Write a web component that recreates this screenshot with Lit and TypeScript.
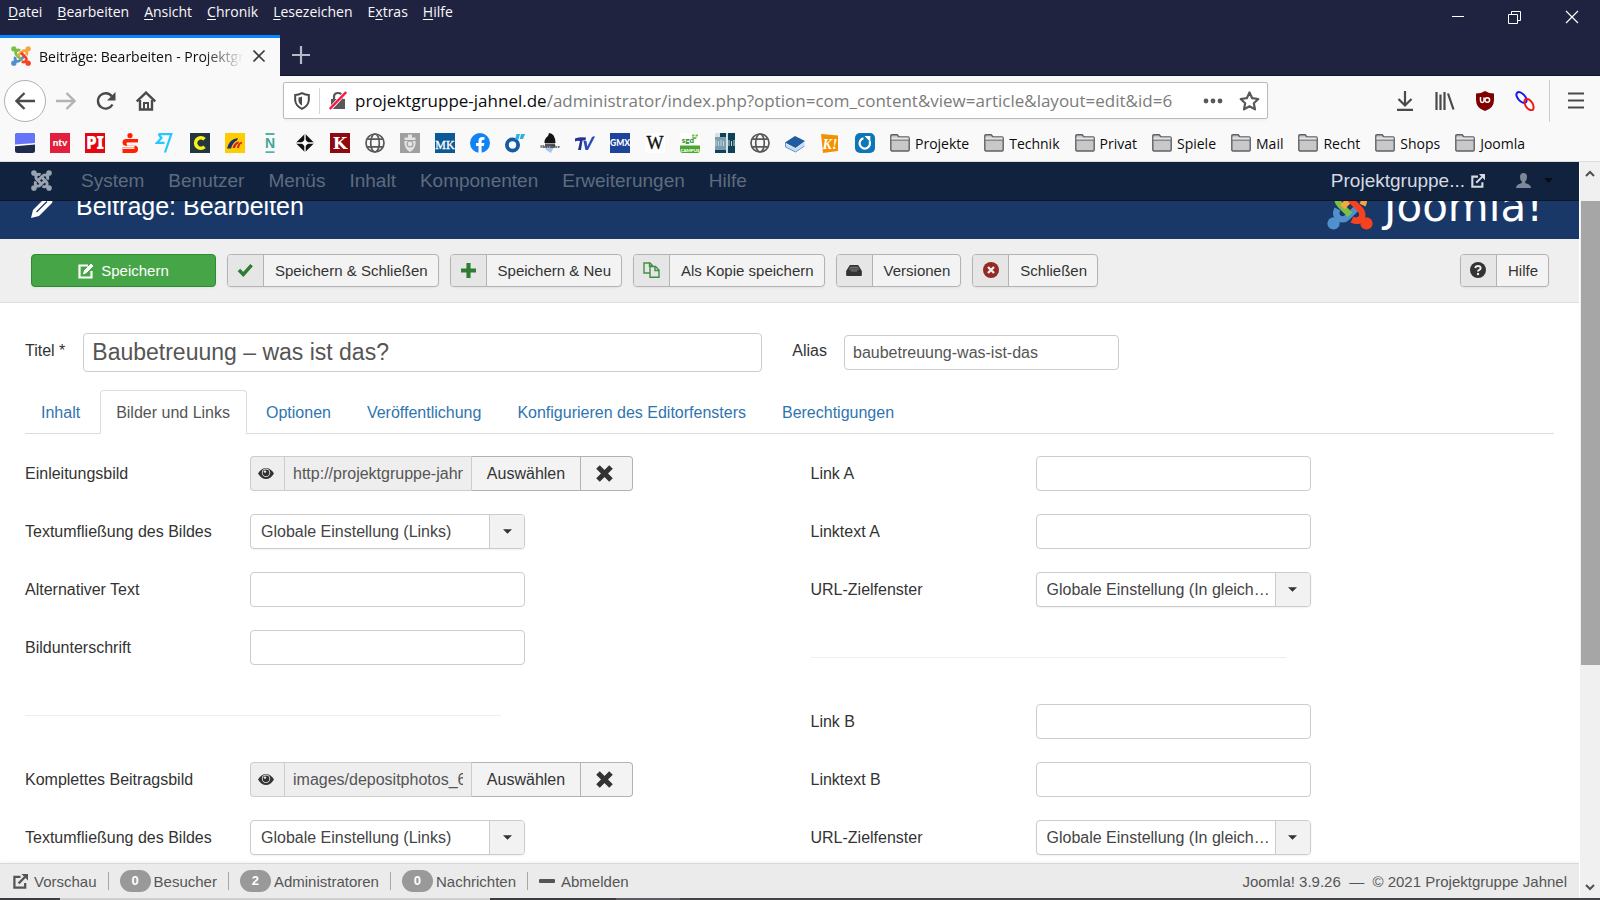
import { LitElement, html, css, svg, nothing } from "lit";
import { customElement } from "lit/decorators.js";

const joomlaArm = (color: string, turn: number) => svg`
  <g transform="rotate(${turn} 12 12)" fill="none" stroke=${color} stroke-width="3.3">
    <circle cx="3.4" cy="20.6" r="3.2" fill=${color} stroke="none" />
    <path d="M4 20 L6.4 17.6" />
    <path d="M5.4 13 Q3.800 16.400 6.400 18 Q8.800 19.200 10.800 17.200 L16 12" />
  </g>`;

const joomlaMark = (size: number, c: string[]) => html`
  <svg width=${size} height=${size} viewBox="0 0 24 24" aria-hidden="true">
    ${joomlaArm(c[0], 0)}${joomlaArm(c[1], 90)}${joomlaArm(c[2], 180)}${joomlaArm(c[3], 270)}
  </svg>`;

const COLORS = ["#5091cd", "#7ac143", "#f9a541", "#f44321"];

const globe = svg`<g fill="none" stroke="#58585a" stroke-width="1.7">
  <circle cx="10" cy="10" r="9" /><ellipse cx="10" cy="10" rx="4.3" ry="9" />
  <path d="M2.2 6.2h15.6M2.2 13.8h15.6" /></g>`;

const favicons = [
  { name: "Lesezeichen 1", art: svg`<rect width="20" height="20" rx="2.5" fill="#1f2a4d"/><path d="M0 2.5Q0 0 2.5 0h15Q20 0 20 2.5v7.7L0 11.8z" fill="#6574f8"/><path d="M0 11.4l20-1.4v1.6L0 13.2z" fill="#fff"/>` },
  { name: "ntv", art: svg`<rect width="20" height="20" fill="#e2203d"/><text x="10" y="13" text-anchor="middle" font-family="Lato" font-weight="900" font-size="10" fill="#fff">ntv</text>` },
  { name: "PI", art: svg`<rect width="20" height="20" fill="#e30613"/><text x="10" y="16" text-anchor="middle" font-family="Noto Sans" font-weight="900" font-size="17" fill="#fff">PI</text>` },
  { name: "Sparkasse", art: svg`<circle cx="10" cy="2.6" r="2.6" fill="#f20"/><path d="M18 6H6.500Q2.500 6 2.500 9.400t4 3.400h8v1.400h-12V20H14q4 0 4-3.800 0-3.600-4-3.600H7V9.600h11z" fill="#f20"/><path d="M6.500 10.600h11.500" stroke="#f9f9fa" stroke-width="1.400"/><path d="M2.500 15.200h12" stroke="#f9f9fa" stroke-width="1.400"/>` },
  { name: "Wise", art: svg`<path d="M3.500 1.200h12.800L10 19.500M3.500 1.200L6.500 5 2 9.800h7.500" fill="none" stroke="#25c8ff" stroke-width="2.200"/>` },
  { name: "C", art: svg`<rect width="20" height="20" fill="#25353f"/><path d="M14.500 6.300a5.200 5.200 0 1 0 0 7.400" fill="none" stroke="#f7f21a" stroke-width="3.600"/>` },
  { name: "Postbank", art: svg`<rect width="20" height="20" fill="#fc0"/><path d="M2 15.500Q4 6 13 5l-1 2.500Q8 9 6 15.500z" fill="#1c3271"/><path d="M7.500 15q1.500-6 6.500-6.500l-.5 1.800Q11 11.500 10 15zM12 15q.8-5.500 4.500-6.300Q17.500 10 17 12l-.8-1.800Q14.500 11.500 14 15z" fill="#d2232a"/>` },
  { name: "N", art: svg`<path d="M5.500 1h9M5.500 19.200h9" stroke="#4db6a0" stroke-width="1.800"/><text x="10" y="15.200" text-anchor="middle" font-family="Liberation Sans" font-size="14" font-weight="700" fill="#3fa796">N</text>` },
  { name: "Stern", art: svg`<path d="M10 3.500l6.500 6.500-6.500 6.500L3.500 10z" fill="none" stroke="#111" stroke-width="4"/><path d="M10 0v20M0 10h20" stroke="#f9f9fa" stroke-width="1.400"/>` },
  { name: "K", art: svg`<rect width="20" height="20" fill="#8f0a10"/><text x="10" y="16" text-anchor="middle" font-family="DejaVu Serif" font-weight="700" font-size="16.500" fill="#fff">K</text>` },
  { name: "Web", art: globe },
  { name: "Wappen", art: svg`<rect width="20" height="20" fill="#9f9f9f"/><path d="M8 1.500h4v3h3.500v7Q14 17 10 19q-4-2-5.500-7.500v-7H8z" fill="#e4e4e4"/><circle cx="10" cy="11" r="3" fill="none" stroke="#9f9f9f" stroke-width="1.200"/><path d="M4 7.500h12" stroke="#9f9f9f"/>` },
  { name: "MK", art: svg`<rect width="20" height="20" fill="#095a97"/><text x="10" y="15.500" text-anchor="middle" font-family="Liberation Serif" font-size="12" fill="#fff" stroke="#fff" stroke-width=".3">MK</text>` },
  { name: "Facebook", art: svg`<circle cx="10" cy="10" r="10" fill="#1283f4"/><path d="M8.500 20v-7H6v-3h2.500V8q0-4 4-4 1 0 2 .2v2.500h-1.300q-1.600 0-1.600 1.500V10h2.800l-.5 3h-2.300v7z" fill="#fff"/>` },
  { name: "O", art: svg`<circle cx="7.500" cy="12" r="5.600" fill="none" stroke="#155aa5" stroke-width="3.800"/><path d="M10 6.500L11.500 1h3.500l-1.500 5.500zM14.800 6L16 1h4L18 6z" fill="#2eb0e4"/>` },
  { name: "Shredder", art: svg`<path d="M4.500 10Q4 6 8 3l1-3q6 0 6.500 10z" fill="#151515"/><path d="M5 14h9l-3 6-5-3z" fill="#abc1ef"/><path d="M5 10.500h10v3H5z" fill="#555"/><text x="10" y="14.500" text-anchor="middle" font-family="Liberation Serif" font-weight="700" font-size="5" fill="#222">Shredder</text>` },
  { name: "TV", art: svg`<path d="M0 5.500q5-2 11-1l-.5 3H7.500L6 17H3L5 8Q2 7.500 0 8.500z" fill="#24338f"/><path d="M8.500 8h3l.8 5.500L17 4q2-1 3-.5L13 17h-2.600z" fill="#2a4bc0"/>` },
  { name: "GMX", art: svg`<rect width="20" height="20" fill="#1c449b"/><text x="10" y="13" text-anchor="middle" font-family="Lato" font-weight="900" font-size="8.500" fill="#fff">GMX</text>` },
  { name: "Wikipedia", art: svg`<rect width="20" height="20" rx="3" fill="#fff"/><text x="10" y="16" text-anchor="middle" font-family="Liberation Serif" font-size="18" fill="#111" stroke="#111" stroke-width=".4">W</text>` },
  { name: "sgd", art: svg`<rect width="20" height="20" rx="3" fill="#fff"/><path d="M0 12.500h20V17q0 3-3 3H3q-3 0-3-3z" fill="#4ba82e"/><text x="8" y="9.500" text-anchor="middle" font-family="Lato" font-weight="900" font-size="8" fill="#2f8f2c">sgd</text><path d="M12 2.500h2.500M15.500 2.500H18M14 5h2.500" stroke="#7ac143" stroke-width="2"/><text x="10" y="18.800" text-anchor="middle" font-family="Lato" font-weight="900" font-size="4.500" fill="#fff">CAMPUS</text>` },
  { name: "Webwerk", art: svg`<rect width="20" height="20" fill="#0d4258"/><path d="M0 4h13v13H0z" fill="#7c9fae"/><path d="M11 0h2v20h-2zM0 0h5v4H0z" fill="#d8e2e6"/><path d="M1 7v6M3.500 8v5M6 7v6M8.500 8v5M14 7v6M16.500 8v5M19 7v6" stroke="#c3d3da" stroke-width="1"/>` },
  { name: "Web", art: globe },
  { name: "Buch", art: svg`<path d="M0 9.500L10 3l10 5-9.500 7z" fill="#1e5b9f"/><path d="M1 11v3l9.500 4.500L19.500 12V9L10.500 15.500z" fill="#c4dbf1"/><path d="M0.500 9.500v4.500l10 5 9-6" fill="none" stroke="#5d96cd" stroke-width="1"/>` },
  { name: "K!", art: svg`<path d="M1 1l17 1.500V18L3 20z" fill="#f39200"/><text x="10" y="15.500" text-anchor="middle" font-family="Liberation Serif" font-style="italic" font-weight="700" font-size="14" fill="#fff">K!</text>` },
  { name: "C", art: svg`<rect width="20" height="20" rx="5" fill="#0c76b8"/><path d="M14.600 8.300A5.200 5.200 0 1 1 8.500 5.300" fill="none" stroke="#fff" stroke-width="2.200"/><path d="M9.500 3h5.800v6z" fill="#fff"/>` },
];

const external = (size: number) => html`<svg width=${size} height=${size} viewBox="0 0 16 16" fill="none" stroke="currentColor" stroke-width="2.400" aria-hidden="true"><path d="M8 3H1.500v11.500H13V9.500" /><path d="M6 10l7-7" /><path d="M9 0H16v7z" fill="currentColor" stroke="none"/></svg>`;

const icons: Record<string, unknown> = {
  check: html`<svg width="17" height="14" viewBox="0 0 18 16"><path d="M1.500 8l5 5L16 2.500" fill="none" stroke="#2f7d32" stroke-width="4"/></svg>`,
  plus: html`<svg width="15" height="15" viewBox="0 0 16 16"><path d="M8 0v16M0 8h16" stroke="#2f7d32" stroke-width="4.400"/></svg>`,
  copy: html`<svg width="17" height="16" viewBox="0 0 17 16" fill="#e6e6e6" stroke="#3f8f43" stroke-width="1.400"><path d="M1 1h6l2.500 2.500V11H1z"/><path d="M7 4.500h5.500L16 8v7.300H7z"/><path d="M12 4.500V8.500h4M6.500 1v3h3" fill="none"/></svg>`,
  drive: html`<svg width="16" height="12" viewBox="0 0 17 13"><path d="M4 1h9l4 6.500V12q0 1-1 1H1q-1 0-1-1V7.500z" fill="#333"/><path d="M4 3.500h9M3 5.500h11M5 7.500h7" stroke="#888" stroke-width="1"/></svg>`,
  cancel: html`<svg width="16" height="16" viewBox="0 0 16 16"><circle cx="8" cy="8" r="8" fill="#942a25"/><path d="M5 5l6 6M11 5l-6 6" stroke="#eee" stroke-width="2.400"/></svg>`,
  help: html`<svg width="16" height="16" viewBox="0 0 16 16"><circle cx="8" cy="8" r="8" fill="#333"/><path d="M5.300 6.200Q5.500 4 8 4t2.700 2.100Q10.700 7.400 9 8.100q-1 .4-1 1.300" fill="none" stroke="#eee" stroke-width="1.900"/><circle cx="8" cy="12" r="1.200" fill="#eee"/></svg>`,
};

const folder = html`<svg width="20" height="18" viewBox="0 0 20 18" aria-hidden="true"><path d="M.8 15.500V2Q.8.800 2 .8h5.200L9 3h9q1.200 0 1.200 1.200v11.600q0 1.200-1.200 1.200H2Q.8 17 .8 15.500z" fill="#c8c8ca" stroke="#606063" stroke-width="1.400"/><path d="M1.500 3.500H18.500V5.500H1.500z" fill="#e4e4e6"/><path d="M1 6.200h18" stroke="#707073"/></svg>`;

const saveActions = [
  { icon: "check", label: "Speichern & Schließen" },
  { icon: "plus", label: "Speichern & Neu" },
  { icon: "copy", label: "Als Kopie speichern" },
  { icon: "drive", label: "Versionen" },
  { icon: "cancel", label: "Schließen" },
];

type Field = { id: string; label: string; kind: "text" | "select" | "media"; value?: string };

const imageGroups: Field[][] = [
  [
    { id: "intro", label: "Einleitungsbild", kind: "media", value: "http://projektgruppe-jahnel.de/images" },
    { id: "float1", label: "Textumfließung des Bildes", kind: "select", value: "Globale Einstellung (Links)" },
    { id: "alt", label: "Alternativer Text", kind: "text" },
    { id: "caption", label: "Bildunterschrift", kind: "text" },
  ],
  [
    { id: "full", label: "Komplettes Beitragsbild", kind: "media", value: "images/depositphotos_64" },
    { id: "float2", label: "Textumfließung des Bildes", kind: "select", value: "Globale Einstellung (Links)" },
  ],
];

const linkGroups: Field[][] = ["A", "B"].map((n) => [
  { id: "link" + n, label: "Link " + n, kind: "text" },
  { id: "linktext" + n, label: "Linktext " + n, kind: "text" },
  { id: "target" + n, label: "URL-Zielfenster", kind: "select", value: "Globale Einstellung (In gleichem Fenster)" },
]);

@customElement("browser-chrome")
export class BrowserChrome extends LitElement {
  static styles = css`
    :host { display: block; font-family: "Open Sans", "Noto Sans", sans-serif; font-size: 14px; color: #0c0c0d; }
    * { box-sizing: border-box; }
    button { border: 0; background: none; padding: 0; font: inherit; color: inherit; display: flex; align-items: center; justify-content: center; }
    a { color: inherit; text-decoration: none; }
    svg { display: block; flex: none; }
    .top { background: #202340; height: 76px; border-bottom: 1px solid #12142b; display: flex; flex-direction: column; justify-content: space-between; }
    .menurow { display: flex; align-items: flex-start; justify-content: space-between; height: 34px; }
    .menus { display: flex; gap: 15px; padding: 0 8px; color: #f9f9fa; line-height: 24px; }
    .menus u { text-underline-offset: 2px; }
    .win { display: flex; color: #fff; }
    .win button { width: 57px; height: 34px; }
    .tabs { display: flex; height: 41px; margin-bottom: -1px; }
    .tab { width: 280px; border-top: 3px solid #0a84ff; background: #f9f9fa; display: flex; align-items: center; gap: 8px; padding: 0 14px 2px 11px; }
    .tabtitle { flex: 1; white-space: nowrap; overflow: hidden; mask-image: linear-gradient(to right, #000 80%, transparent); }
    .tab button { width: 14px; }
    .newtab { width: 42px; padding-bottom: 2px; color: #b8b9c6; }
    .nav { height: 49px; background: #f9f9fa; display: flex; align-items: center; padding: 0 11px 0 4px; color: #4a4a4c; }
    .tool { width: 40px; height: 40px; }
    .nav .back { width: 42px; height: 42px; border: 1px solid #b1b1b3; border-radius: 50%; background: #fff; }
    .faded { opacity: .4; }
    .url { flex: 1; max-width: 985px; height: 37px; margin-left: 117px; background: #fff; border: 1px solid #bbb; border-radius: 2px; display: flex; align-items: center; box-shadow: 0 1px 3px rgba(0,0,0,.06); }
    .shield { width: 36px; height: 26px; border-right: 1px solid #d7d7db; display: flex; justify-content: center; align-items: center; }
    .lock { width: 35px; display: flex; justify-content: center; }
    .addr { flex: 1; font-size: 17px; color: #7b7b7b; white-space: nowrap; overflow: hidden; }
    .addr b { font-weight: 400; color: #0c0c0d; }
    .url button { width: 36px; }
    .right { margin-left: auto; display: flex; align-items: center; }
    .menu { border-left: 1px solid #ccc; width: 40px; height: 42px; margin-left: 4px; padding-left: 12px; }
    .marks { height: 37px; background: #f9f9fa; border-bottom: 1px solid #ddd; display: flex; align-items: center; gap: 15px; padding: 0 15px; white-space: nowrap; overflow: hidden; }
    .mark { display: flex; align-items: center; gap: 5px; }
  `;

  render() {
    const menus = [["", "D", "atei"], ["", "B", "earbeiten"], ["", "A", "nsicht"], ["", "C", "hronik"], ["", "L", "esezeichen"], ["E", "x", "tras"], ["", "H", "ilfe"]];
    return html`
      <div class="top">
        <div class="menurow">
          <nav class="menus">${menus.map(([a, k, b]) => html`<span>${a}<u>${k}</u>${b}</span>`)}</nav>
          <div class="win">
            <button aria-label="Minimieren"><svg width="12" height="12" viewBox="0 0 12 12"><path d="M0 5.500h12" stroke="#fff"/></svg></button>
            <button aria-label="Wiederherstellen"><svg width="13" height="13" viewBox="0 0 13 13" fill="none" stroke="#fff"><path d="M.5 3.500h9v9h-9zM3.500 3.500v-3h9v9h-3"/></svg></button>
            <button aria-label="Schließen"><svg width="14" height="14" viewBox="0 0 14 14"><path d="M1 1l12 12M13 1L1 13" stroke="#fff" stroke-width="1.200"/></svg></button>
          </div>
        </div>
        <div class="tabs">
          <div class="tab">
            ${joomlaMark(20, COLORS)}
            <span class="tabtitle">Beiträge: Bearbeiten - Projektgruppe</span>
            <button aria-label="Tab schließen"><svg width="14" height="14" viewBox="0 0 14 14"><path d="M1.500 1.500l11 11M12.500 1.500l-11 11" stroke="#38383a" stroke-width="1.700"/></svg></button>
          </div>
          <button class="newtab" aria-label="Neuer Tab"><svg width="18" height="18" viewBox="0 0 18 18"><path d="M9 0v18M0 9h18" stroke="currentColor" stroke-width="2.200"/></svg></button>
        </div>
      </div>
      <div class="nav">
        <button class="back" aria-label="Zurück"><svg width="20" height="20" viewBox="0 0 20 20" fill="none" stroke="currentColor" stroke-width="2.400"><path d="M20 10H2M9.500 2L1.500 10l8 8"/></svg></button>
        <button class="tool faded" aria-label="Vor"><svg width="20" height="20" viewBox="0 0 20 20" fill="none" stroke="currentColor" stroke-width="2.400"><path d="M0 10h18M10.500 2l8 8-8 8"/></svg></button>
        <button class="tool" aria-label="Neu laden"><svg width="20" height="20" viewBox="0 0 20 20"><path d="M16.500 13.500A7.700 7.700 0 1 1 15.800 5.200" fill="none" stroke="currentColor" stroke-width="2.400"/><path d="M19.500 1v8.500H11z" fill="currentColor"/></svg></button>
        <button class="tool" aria-label="Startseite"><svg width="20" height="20" viewBox="0 0 20 20" fill="none" stroke="currentColor" stroke-width="2.400"><path d="M.8 10.500L10 1.600l9.200 8.900"/><path d="M4 9v9.500h12V9"/><path d="M8 18v-6h4v6" stroke-width="2"/></svg></button>
        <div class="url">
          <span class="shield"><svg width="16" height="18" viewBox="0 0 16 18"><path d="M8 1.200Q11.500 3 14.800 3v5.500Q14.200 14 8 16.800 1.800 14 1.200 8.500V3Q4.500 3 8 1.200z" fill="none" stroke="#4a4a4c" stroke-width="2"/><path d="M8 4.500v9Q4.500 11.500 4.500 8V5.500Q6.500 5.300 8 4.500z" fill="#4a4a4c"/></svg></span>
          <span class="lock"><svg width="18" height="19" viewBox="0 0 18 19"><path d="M2 8h14v10H2z" fill="#58585a"/><path d="M5 9V6q0-4 4-4t4 4v3" fill="none" stroke="#58585a" stroke-width="2.200"/><path d="M1 18L17 1" stroke="#fff" stroke-width="4"/><path d="M.8 18L17.200 1" stroke="#ff1744" stroke-width="2.400"/></svg></span>
          <span class="addr"><b>projektgruppe-jahnel.de</b>/administrator/index.php?option=com_content&amp;view=article&amp;layout=edit&amp;id=6</span>
          <button aria-label="Seitenaktionen"><svg width="20" height="6" viewBox="0 0 20 6" fill="#58585a"><circle cx="3" cy="3" r="2.400"/><circle cx="10" cy="3" r="2.400"/><circle cx="17" cy="3" r="2.400"/></svg></button>
          <button aria-label="Lesezeichen hinzufügen"><svg width="21" height="20" viewBox="0 0 21 20"><path d="M10.500 1.500l2.700 5.700 6.100.8-4.500 4.200 1.200 6.200-5.500-3.100-5.500 3.100 1.200-6.200L1.700 8l6.100-.8z" fill="none" stroke="#58585a" stroke-width="2.200" stroke-linejoin="round"/></svg></button>
        </div>
        <div class="right">
          <button class="tool" aria-label="Downloads"><svg width="16" height="20" viewBox="0 0 16 20" fill="none" stroke="currentColor" stroke-width="2.200"><path d="M8 0v14M1.500 8L8 14.500 14.500 8M0 18.800h16"/></svg></button>
          <button class="tool" aria-label="Bibliothek"><svg width="20" height="18" viewBox="0 0 20 18" stroke="currentColor" stroke-width="2.200"><path d="M1.500 0v18M5.500 2.500V18M9.500 0v18M13 1.500L18.500 17.500"/></svg></button>
          <button class="tool" aria-label="uBlock Origin"><svg width="18" height="20" viewBox="0 0 18 20"><path d="M9 0q4 2.500 9 2.500V9q0 8-9 11Q0 17 0 9V2.500Q5 2.500 9 0z" fill="#800000"/><path d="M4.500 6v3.800q0 1.700 1.700 1.700T8 9.800V6.500" fill="none" stroke="#fff" stroke-width="1.500"/><circle cx="11.300" cy="9" r="2.300" fill="none" stroke="#fff" stroke-width="1.500"/></svg></button>
          <button class="tool" aria-label="Verknüpfungen"><svg width="20" height="20" viewBox="0 0 20 20" fill="none" stroke-width="2"><ellipse cx="6.500" cy="6.500" rx="3.600" ry="6.500" transform="rotate(-42 6.500 6.500)" stroke="#1616f5"/><ellipse cx="14" cy="13.500" rx="3.600" ry="6.500" transform="rotate(-32 14 13.500)" stroke="#f01818"/></svg></button>
          <button class="menu" aria-label="Menü"><svg width="16" height="17" viewBox="0 0 16 17" stroke="currentColor" stroke-width="2.200"><path d="M0 1.500h16M0 8.500h16M0 15.500h16"/></svg></button>
        </div>
      </div>
      <nav class="marks">
        ${favicons.map((f) => html`<a class="mark" href="#" aria-label=${f.name}><svg width="20" height="20" viewBox="0 0 20 20" aria-hidden="true">${f.art}</svg></a>`)}
        ${["Projekte", "Technik", "Privat", "Spiele", "Mail", "Recht", "Shops", "Joomla"].map((t) => html`<a class="mark" href="#">${folder}<span>${t}</span></a>`)}
      </nav>`;
  }
}

@customElement("article-form")
export class ArticleForm extends LitElement {
  static styles = css`
    :host { display: block; flex: 1; min-height: 0; overflow: hidden; padding: 30px 25px 0; font-size: 16px; color: #333; }
    * { box-sizing: border-box; }
    svg { display: block; }
    input, select, button { font: inherit; color: #555; }
    input, select { height: 35px; border: 1px solid #ccc; border-radius: 4px; background: #fff; padding: 0 8px; margin: 0; width: 275px; }
    a { color: #2f74b0; text-decoration: none; }
    .head { display: flex; align-items: center; }
    .head label { padding-bottom: 4px; }
    .head .title { flex: 0 1 679px; min-width: 0; height: 39px; font-size: 23px; margin: 0 30px 0 18px; }
    .head .alias { margin-left: 17px; }
    .tabs { display: flex; gap: 3px; margin-top: 18px; height: 44px; border-bottom: 1px solid #ddd; }
    .tabs a { padding: 0 16px 0 15px; line-height: 44px; height: 44px; border: 1px solid transparent; border-bottom: 0; border-radius: 4px 4px 0 0; white-space: nowrap; }
    .tabs .active { color: #555; background: #fff; border-color: #ddd; }
    .cols { display: grid; grid-template-columns: 1fr 1fr; gap: 42px; padding-top: 22px; }
    .group { display: flex; flex-direction: column; gap: 23px; }
    .row { display: grid; grid-template-columns: 225px 1fr; align-items: center; height: 35px; }
    hr { border: 0; border-top: 1px solid #eee; width: 64%; margin: 50px 0 46px; }
    .pick { position: relative; width: 275px; }
    select { display: block; appearance: none; color: #444; padding: 0 38px 0 10px; text-overflow: ellipsis; overflow: hidden; white-space: nowrap; box-shadow: 0 1px 2px rgba(0,0,0,.06); }
    .arrow { position: absolute; right: 1px; top: 1px; bottom: 1px; width: 35px; border-left: 1px solid #ccc; background: #f2f2f2; border-radius: 0 3px 3px 0; display: flex; align-items: center; justify-content: center; pointer-events: none; }
    .media { display: flex; height: 35px; width: 383px; }
    .media > * { height: 35px; display: flex; align-items: center; justify-content: center; }
    .eye { width: 34px; background: #eee; border: 1px solid #ccc; border-right: 0; border-radius: 4px 0 0 4px; padding: 0 4px 2px 0; }
    .media input { width: 188px; border-radius: 0; background: #eee; }
    .media button { background: #f3f3f3; border: 1px solid #b3b3b3; border-left: 0; color: #333; padding: 0; width: 109px; }
    .media .clear { width: 52px; border-radius: 0 4px 4px 0; padding-right: 4px; }
  `;

  control(f: Field) {
    if (f.kind === "select")
      return html`<div class="pick"><select id=${f.id}><option>${f.value}</option></select><span class="arrow"><svg width="9" height="5" viewBox="0 0 10 5"><path d="M0 0h10L5 5z" fill="#333"/></svg></span></div>`;
    if (f.kind === "media")
      return html`<div class="media">
        <span class="eye"><svg width="16" height="12" viewBox="0 0 16 12"><path d="M0 6.500Q3.500 1 8 1t8 5.500Q12.500 12 8 12T0 6.500z" fill="#333"/><circle cx="8" cy="5.800" r="4.200" fill="#eee"/><circle cx="8" cy="5.800" r="3.400" fill="#333"/><circle cx="7" cy="4.600" r="1.200" fill="#eee"/></svg></span>
        <input id=${f.id} readonly .value=${f.value ?? ""} />
        <button>Auswählen</button>
        <button class="clear" aria-label="Leeren"><svg width="17" height="17" viewBox="0 0 17 17"><path d="M2 2l13 13M15 2L2 15" stroke="#333" stroke-width="5"/></svg></button>
      </div>`;
    return html`<input id=${f.id} type="text" />`;
  }

  column(groups: Field[][]) {
    return html`<div>${groups.map((g, i) => html`
      ${i ? html`<hr />` : nothing}
      <div class="group">${g.map((f) => html`<div class="row"><label for=${f.id}>${f.label}</label>${this.control(f)}</div>`)}</div>`)}</div>`;
  }

  render() {
    return html`
      <div class="head">
        <label for="title">Titel *</label><input class="title" id="title" value="Baubetreuung – was ist das?" />
        <label for="alias">Alias</label><input class="alias" id="alias" value="baubetreuung-was-ist-das" />
      </div>
      <nav class="tabs">${["Inhalt", "Bilder und Links", "Optionen", "Veröffentlichung", "Konfigurieren des Editorfensters", "Berechtigungen"].map(
        (t, i) => html`<a href="#" class=${i === 1 ? "active" : ""}>${t}</a>`)}</nav>
      <div class="cols">${this.column(imageGroups)}${this.column(linkGroups)}</div>`;
  }
}

@customElement("app-root")
export class AppRoot extends LitElement {
  static styles = css`
    :host { display: flex; flex-direction: column; height: 100vh; overflow: hidden; background: #fff; font-family: "Liberation Sans", Arial, sans-serif; }
    * { box-sizing: border-box; }
    svg { display: block; flex: none; }
    a { color: inherit; text-decoration: none; }
    button { font: inherit; padding: 0; }
    .view { flex: 1; min-height: 0; display: flex; }
    .page { flex: 1; min-width: 0; display: flex; flex-direction: column; }
    .navbar { position: relative; z-index: 1; flex: none; height: 39px; background: #10223e; border-bottom: 1px solid #0b182c; display: flex; align-items: center; padding: 0 26px 1px 31px; font-size: 19px; line-height: 36px; color: #5f6b7e; }
    .navbar .items { display: flex; gap: 24px; margin-left: 29px; }
    .site { margin-left: auto; display: flex; align-items: center; gap: 6px; color: #d5dae2; }
    .user { display: flex; align-items: center; gap: 13px; margin-left: 31px; }
    .clip { flex: none; height: 38px; overflow: hidden; background: #1a3867; }
    .header { height: 65px; margin-top: -27px; display: flex; align-items: center; padding: 0 36px 0 31px; color: #fff; }
    .header h1 { margin: 0 0 0 23px; font-size: 25px; font-weight: 400; }
    .brand { margin-left: auto; display: flex; align-items: center; gap: 11px; font: 400 42px/65px "DejaVu Sans", Verdana, sans-serif; }
    .toolbar { flex: none; height: 64px; background: #efefef; border-bottom: 1px solid #ddd; display: flex; align-items: center; gap: 11px; padding: 0 30px 0 31px; font-size: 15px; }
    .btn { height: 33px; display: flex; align-items: stretch; border: 1px solid #b3b3b3; border-radius: 4px; background: #f3f3f3; color: #333; white-space: nowrap; overflow: hidden; box-shadow: 0 1px 2px rgba(0,0,0,.05); }
    .btn .ico { width: 36px; background: #e6e6e6; border-right: 1px solid #b3b3b3; display: flex; align-items: center; justify-content: center; padding-bottom: 1px; }
    .btn .txt { padding: 0 10px 0 11px; align-self: center; }
    .save { width: 185px; background: #46a546; border-color: #2f8b33; color: #fff; align-items: center; justify-content: center; gap: 7px; }
    .end { margin-left: auto; }
    .status { flex: none; height: 35px; background: #ebebeb; border-top: 1px solid #d8d8d8; display: flex; align-items: center; gap: 11px; padding: 0 12px 0 13px; font-size: 15px; color: #555; box-shadow: 0 -1px 3px rgba(0,0,0,.06); }
    .status a { display: flex; align-items: center; gap: 6px; }
    .count { display: flex; align-items: center; gap: 3px; }
    .badge { background: #999; color: #fff; font-size: 13px; font-weight: 700; line-height: 22px; width: 31px; border-radius: 11px; text-align: center; }
    .sep { width: 1px; height: 18px; background: #a8a8a8; }
    .scroll { width: 21px; background: #f0f0f0; border-left: 1px solid #fff; display: flex; flex-direction: column; align-items: center; }
    .arrow { flex: none; height: 39px; padding-top: 8px; }
    .thumb { flex: none; width: 19px; height: 63%; background: #a6a6a6; margin-bottom: auto; }
    .down { height: 22px; }
    .edge { height: 2px; background: linear-gradient(to right, #3d3d40 60px, #cfcfcf 60px 490px, #3d3d40 490px 616px, #5c5c60 616px 680px, #434346 680px); }
  `;

  render() {
    const gray = "#9aa3b0";
    const counts = [["0", "Besucher"], ["2", "Administratoren"], ["0", "Nachrichten"]];
    return html`
      <browser-chrome></browser-chrome>
      <div class="view">
        <main class="page">
          <div class="navbar">
            ${joomlaMark(21, [gray, gray, gray, gray])}
            <nav class="items">${["System", "Benutzer", "Menüs", "Inhalt", "Komponenten", "Erweiterungen", "Hilfe"].map((t) => html`<a href="#">${t}</a>`)}</nav>
            <a class="site" href="#">Projektgruppe... ${external(14)}</a>
            <a class="user" href="#" aria-label="Benutzermenü">
              <svg width="15" height="15" viewBox="0 0 15 15"><path d="M7.500 0q3.500 0 3.500 4 0 3-1.800 4.600V10q4 1 5.300 3l.5 2H0l.5-2q1.300-2 5.300-3V8.600Q4 7 4 4q0-4 3.500-4z" fill="#7e8797"/></svg>
              <svg width="9" height="5" viewBox="0 0 9 5"><path d="M0 0h9L4.500 5z" fill="#060d18"/></svg>
            </a>
          </div>
          <div class="clip">
            <header class="header">
              <svg width="22" height="22" viewBox="0 0 22 22"><path d="M0 22l2-8L14.500 1.500Q16 0 17.500 1l3.500 3.500q1 1.500-.5 3L8 20z" fill="#fff"/><path d="M5.500 16L16 5.500" stroke="#1a3867" stroke-width="1.300"/></svg>
              <h1>Beiträge: Bearbeiten</h1>
              <div class="brand">${joomlaMark(46, COLORS)}<span>Joomla!</span></div>
            </header>
          </div>
          <div class="toolbar">
            <button class="btn save"><svg width="16" height="16" viewBox="0 0 16 16" fill="none" stroke="#fff" stroke-width="2.200"><path d="M10 2.500H1.500v12h12V8"/><path d="M5.500 11l1-3.500L13 1l2 2-6.500 6.500z" fill="#fff" stroke-width="1"/></svg>Speichern</button>
            ${saveActions.map((a) => html`<button class="btn"><span class="ico">${icons[a.icon]}</span><span class="txt">${a.label}</span></button>`)}
            <button class="btn end"><span class="ico">${icons.help}</span><span class="txt">Hilfe</span></button>
          </div>
          <article-form></article-form>
          <footer class="status">
            <a href="#">${external(15)}Vorschau</a>
            ${counts.map(([n, t]) => html`<span class="sep"></span><span class="count"><span class="badge">${n}</span>${t}</span>`)}
            <span class="sep"></span>
            <a href="#"><svg width="16" height="4" viewBox="0 0 16 4"><rect width="16" height="4" rx="1" fill="#555"/></svg>Abmelden</a>
            <span class="end">Joomla! 3.9.26 &nbsp;—&nbsp; © 2021 Projektgruppe Jahnel</span>
          </footer>
        </main>
        <div class="scroll">
          <div class="arrow"><svg width="10" height="7" viewBox="0 0 10 7" fill="none" stroke="#505050" stroke-width="2"><path d="M1 6l4-4 4 4"/></svg></div>
          <div class="thumb"></div>
          <div class="arrow down"><svg width="10" height="7" viewBox="0 0 10 7" fill="none" stroke="#505050" stroke-width="2"><path d="M1 1l4 4 4-4"/></svg></div>
        </div>
      </div>
      <div class="edge"></div>`;
  }
}
